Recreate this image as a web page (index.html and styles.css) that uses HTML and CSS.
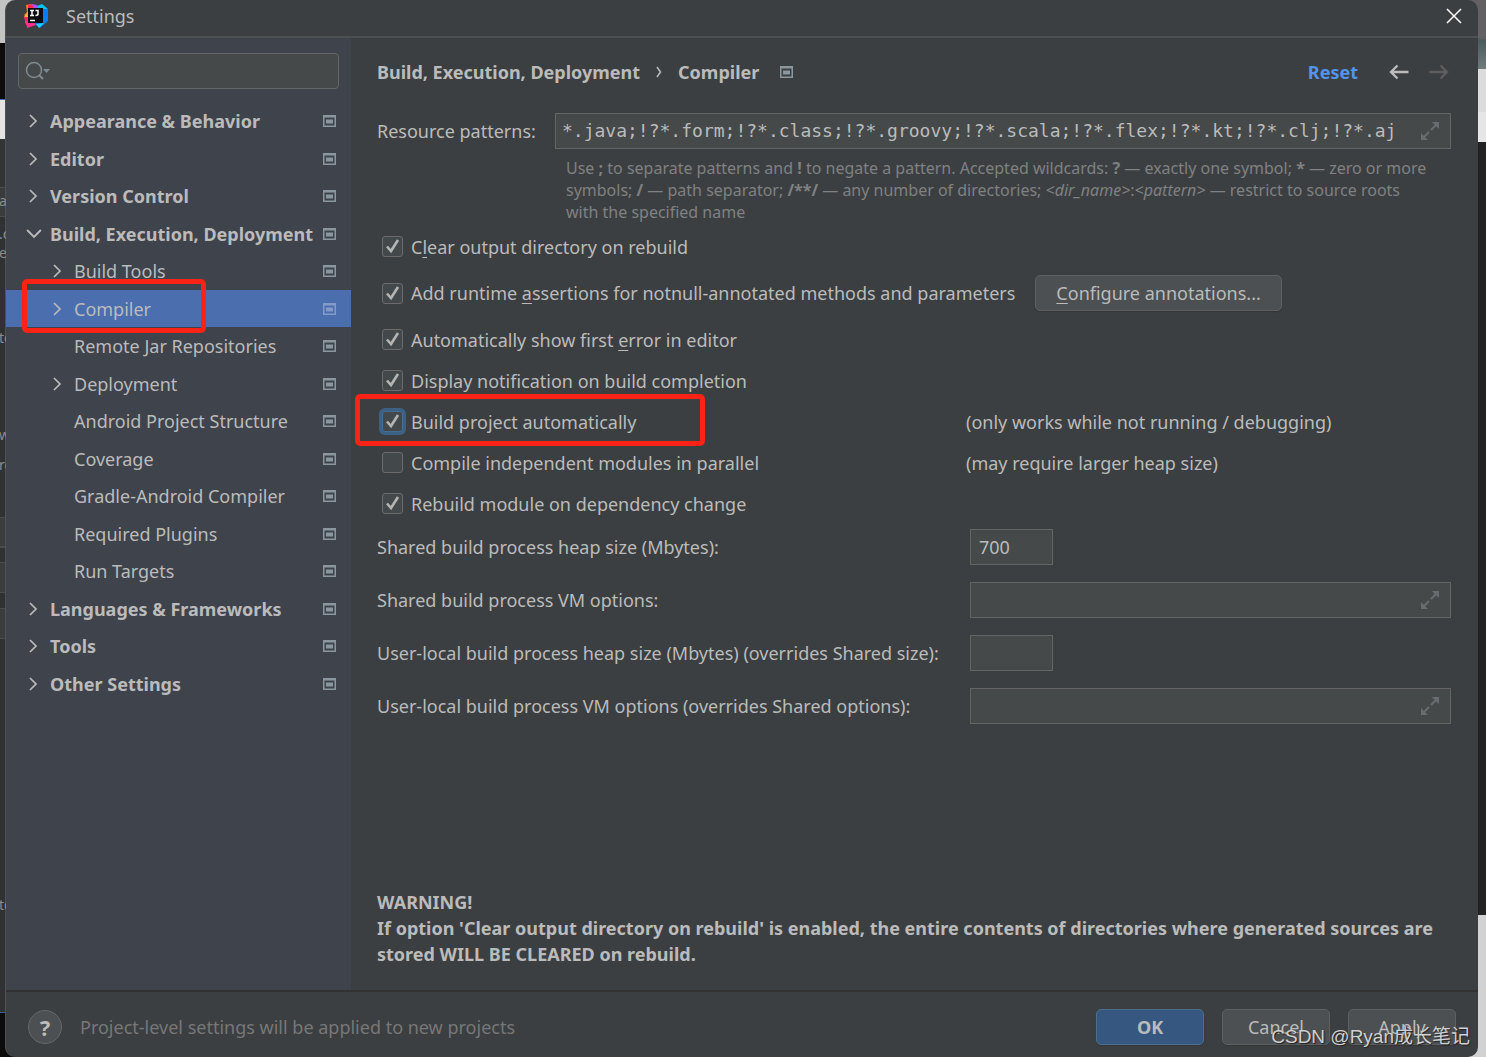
FILE: index.html
```html
<!DOCTYPE html>
<html lang="en">
<head>
    <meta charset="UTF-8">
    <meta name="viewport" content="width=device-width, initial-scale=1.0">
    <title>Settings</title>
    <link rel="stylesheet" href="styles.css">
</head>
<body>
    <svg class="sprite" aria-hidden="true">
        <symbol id="scope" viewBox="0 0 13 12">
            <path fill="currentColor" fill-rule="evenodd" d="M0 0h13v12H0zM1.500 2.500v8h10v-8z"/>
            <path fill="currentColor" d="M3 4.500h7v4H3z"/>
        </symbol>
        <symbol id="right" viewBox="0 0 10 14">
            <path fill="none" stroke="currentColor" stroke-width="1.700" d="M1 1l6 6-6 6"/>
        </symbol>
        <symbol id="down" viewBox="0 0 14 10">
            <path fill="none" stroke="currentColor" stroke-width="1.700" d="M1 1.500l6 6 6-6"/>
        </symbol>
        <symbol id="expand" viewBox="0 0 18 18">
            <path fill="currentColor" d="M11 0h7v7zM0 11l7 7H0z"/>
            <path fill="none" stroke="currentColor" stroke-width="2" d="M15 3l-5 5M3 15l5-5"/>
        </symbol>
        <symbol id="arrow" viewBox="0 0 20 16">
            <path fill="none" stroke="currentColor" stroke-width="2.400" d="M19.500 8H2.500M8.500 1.500L2 8l6.500 6.500"/>
        </symbol>
    </svg>

    <!-- editor that shows behind the dialog -->
    <div class="behind" aria-hidden="true">
        <span class="b1">a</span>
        <span class="b2">.c</span>
        <span class="b3">er</span>
        <span class="b4">te</span>
        <span class="b5">w</span>
        <span class="b6">re</span>
        <span class="b7">te</span>
    </div>

    <div class="window">
        <header class="titlebar">
            <svg class="logo" viewBox="0 0 24 24">
                <path fill="#fc801d" d="M2 1l6-1 4 3-5 18-6-2 1-6-2-2 3-3z"/>
                <path fill="#fe2857" d="M4 1l4-1 3 4-7 6zM0 13l5-3 3 8-6 3z"/>
                <path fill="#ffb13d" d="M0 13l5-6v6z"/>
                <path fill="#ff318c" d="M2 17h7l3 4-9 3z"/>
                <path fill="#b74af7" d="M8 0l5 1 2 4-5 1z"/>
                <path fill="#07c3f2" d="M13 2l5-2 6 5-1 5-8-4z"/>
                <path fill="#087cfa" d="M19 5l5 0v12l-8 7-5-4z"/>
                <path fill="#21d0ff" d="M12 20l8-1-5 5z"/>
                <path fill="#0c0c12" d="M4 4h15v15H4z"/>
                <path fill="none" stroke="#fff" stroke-width="1.500" d="M6 6.500h4M8 6.500v5M6 11.500h4M11.500 6.500H14v3.500q0 1.500-2.500 1.500M6 16.500h5"/>
            </svg>
            <span>Settings</span>
            <button class="close" aria-label="Close">
                <svg viewBox="0 0 16 16"><path fill="none" stroke="#fff" stroke-width="1.500" d="M1 1l14 14M15 1L1 15"/></svg>
            </button>
        </header>

        <div class="content">
            <nav class="sidebar">
                <label class="search">
                    <svg viewBox="0 0 26 20">
                        <circle cx="9" cy="9" r="7.500" fill="none" stroke="#7f8b91" stroke-width="1.500"/>
                        <path fill="none" stroke="#7f8b91" stroke-width="2" d="M14 14l4 4"/>
                        <path fill="#7f8b91" d="M18 8h7l-3.500 4z"/>
                    </svg>
                    <input type="text" aria-label="Search settings">
                </label>
                <ul class="tree">
                    <li class="group"><svg class="chev"><use href="#right"/></svg><a href="#">Appearance &amp; Behavior</a><svg class="scope"><use href="#scope"/></svg></li>
                    <li class="group"><svg class="chev"><use href="#right"/></svg><a href="#">Editor</a><svg class="scope"><use href="#scope"/></svg></li>
                    <li class="group"><svg class="chev"><use href="#right"/></svg><a href="#">Version Control</a><svg class="scope"><use href="#scope"/></svg></li>
                    <li class="group"><svg class="chev"><use href="#down"/></svg><a href="#">Build, Execution, Deployment</a><svg class="scope"><use href="#scope"/></svg></li>
                    <li class="child"><svg class="chev"><use href="#right"/></svg><a href="#">Build Tools</a><svg class="scope"><use href="#scope"/></svg></li>
                    <li class="child selected"><svg class="chev"><use href="#right"/></svg><a href="#">Compiler</a><svg class="scope"><use href="#scope"/></svg></li>
                    <li class="child"><svg class="chev"></svg><a href="#">Remote Jar Repositories</a><svg class="scope"><use href="#scope"/></svg></li>
                    <li class="child"><svg class="chev"><use href="#right"/></svg><a href="#">Deployment</a><svg class="scope"><use href="#scope"/></svg></li>
                    <li class="child"><svg class="chev"></svg><a href="#">Android Project Structure</a><svg class="scope"><use href="#scope"/></svg></li>
                    <li class="child"><svg class="chev"></svg><a href="#">Coverage</a><svg class="scope"><use href="#scope"/></svg></li>
                    <li class="child"><svg class="chev"></svg><a href="#">Gradle-Android Compiler</a><svg class="scope"><use href="#scope"/></svg></li>
                    <li class="child"><svg class="chev"></svg><a href="#">Required Plugins</a><svg class="scope"><use href="#scope"/></svg></li>
                    <li class="child"><svg class="chev"></svg><a href="#">Run Targets</a><svg class="scope"><use href="#scope"/></svg></li>
                    <li class="group"><svg class="chev"><use href="#right"/></svg><a href="#">Languages &amp; Frameworks</a><svg class="scope"><use href="#scope"/></svg></li>
                    <li class="group"><svg class="chev"><use href="#right"/></svg><a href="#">Tools</a><svg class="scope"><use href="#scope"/></svg></li>
                    <li class="group"><svg class="chev"><use href="#right"/></svg><a href="#">Other Settings</a><svg class="scope"><use href="#scope"/></svg></li>
                </ul>
            </nav>

            <main class="main">
                <div class="crumbs">
                    <b>Build, Execution, Deployment</b>
                    <svg class="sep" viewBox="0 0 6 12"><path fill="none" stroke="#bbb" stroke-width="1.500" d="M1 1l3.500 5L1 11"/></svg>
                    <b>Compiler</b>
                    <svg class="scope"><use href="#scope"/></svg>
                    <a class="reset" href="#">Reset</a>
                    <button class="nav" aria-label="Back"><svg><use href="#arrow"/></svg></button>
                    <button class="nav forward" aria-label="Forward" disabled><svg><use href="#arrow"/></svg></button>
                </div>

                <div class="patterns">
                    <label for="patterns">Resource patterns:</label>
                    <div class="field">
                        <input class="mono" type="text" id="patterns" value="*.java;!?*.form;!?*.class;!?*.groovy;!?*.scala;!?*.flex;!?*.kt;!?*.clj;!?*.aj">
                        <svg class="expand"><use href="#expand"/></svg>
                    </div>
                    <p class="hint">Use <b>;</b> to separate patterns and <b>!</b> to negate a pattern. Accepted wildcards: <b>?</b> — exactly one symbol; <b>*</b> — zero or more<br>
                    symbols; <b>/</b> — path separator; <b>/**/</b> — any number of directories; <i>&lt;dir_name&gt;</i>:<i>&lt;pattern&gt;</i> — restrict to source roots<br>
                    with the specified name</p>
                </div>

                <div class="checks">
                    <div class="check">
                        <label><input type="checkbox" checked><span>C<u>l</u>ear output directory on rebuild</span></label>
                    </div>
                    <div class="check wide">
                        <label><input type="checkbox" checked><span>Add runtime <u>a</u>ssertions for notnull-annotated methods and parameters</span></label>
                        <button class="btn"><span><u>C</u>onfigure annotations...</span></button>
                    </div>
                    <div class="check">
                        <label><input type="checkbox" checked><span>Automatically show first <u>e</u>rror in editor</span></label>
                    </div>
                    <div class="check">
                        <label><input type="checkbox" checked><span>Display notification on build completion</span></label>
                    </div>
                    <div class="check marked">
                        <label><input class="focused" type="checkbox" checked><span>Build project automatically</span></label>
                        <span>(only works while not running / debugging)</span>
                    </div>
                    <div class="check">
                        <label><input type="checkbox"><span>Compile independent modules in parallel</span></label>
                        <span>(may require larger heap size)</span>
                    </div>
                    <div class="check">
                        <label><input type="checkbox" checked><span>Rebuild module on dependency change</span></label>
                    </div>
                </div>

                <div class="options">
                    <label for="heap">Shared build process heap size (Mbytes):</label>
                    <div class="field short"><input type="text" id="heap" value="700"></div>
                    <label for="vm">Shared build process VM options:</label>
                    <div class="field"><input type="text" id="vm"><svg class="expand"><use href="#expand"/></svg></div>
                    <label for="userHeap">User-local build process heap size (Mbytes) (overrides Shared size):</label>
                    <div class="field short"><input type="text" id="userHeap"></div>
                    <label for="userVm">User-local build process VM options (overrides Shared options):</label>
                    <div class="field"><input type="text" id="userVm"><svg class="expand"><use href="#expand"/></svg></div>
                </div>

                <p class="warning">WARNING!<br>
                If option 'Clear output directory on rebuild' is enabled, the entire contents of directories where generated sources are stored WILL BE CLEARED on rebuild.</p>
            </main>
        </div>

        <footer class="footer">
            <button class="help" aria-label="Help">?</button>
            <span class="note">Project-level settings will be applied to new projects</span>
            <button class="btn primary">OK</button>
            <button class="btn">Cancel</button>
            <button class="btn">Apply</button>
        </footer>
    </div>

    <div class="watermark">CSDN @Ryan成长笔记</div>
</body>
</html>
```
FILE: styles.css
```css
*, *::after {
    box-sizing: border-box;
}
body {
    margin: 0;
    min-height: 100vh;
    display: flex;
    font: 18px/24px "Noto Sans", "Open Sans", sans-serif;
    color: #bbbbbb;
    background:
        linear-gradient(#c4c4c4 43px, #0c0c0c 43px, #0c0c0c 99px, #4a76b0 99px, #4a76b0 100px, #e4e4e4 100px, #e4e4e4 139px, #323435 139px, #323435 187px, #4a4c4d 187px, #4a4c4d 188px, #393b3c 188px, #393b3c 216px, #4a4c4d 216px, #4a4c4d 217px, #303132 217px, #303132 517px, #4a4c4d 517px, #4a4c4d 518px, #3a3c3d 518px, #3a3c3d 546px, #4a4c4d 546px, #4a4c4d 548px, #303132 548px, #303132 562px, #4a4c4d 562px, #4a4c4d 563px, #3a3c3d 563px, #3a3c3d 592px, #4a4c4d 592px, #4a4c4d 593px, #303132 593px, #303132 608px, #4a4c4d 608px, #4a4c4d 609px, #3a3c3d 609px, #3a3c3d 638px, #4a4c4d 638px, #4a4c4d 639px, #2f3132 639px, #2f3132 1012px, #34618f 1012px, #34618f 1013px, #0c0c0c 1013px) left / 20px 100% no-repeat,
        linear-gradient(#646164 38px, #4b5b5c 40px, #6f7a7b 69px, #dcdcdc 69px, #dcdcdc 112px, #e6e6e6 112px, #e6e6e6 142px, #222222 142px, #222222 915px, #d2d2d2 915px) right / 20px 100% no-repeat;
}
.sprite {
    position: absolute;
    width: 0;
    height: 0;
}
ul, p {
    margin: 0;
    padding: 0;
}
a {
    color: inherit;
    text-decoration: none;
}
button, input {
    font: inherit;
    color: inherit;
}
u {
    text-underline-offset: 3px;
}

/* slice of the editor on the left edge */
.behind {
    position: absolute;
    left: 0;
    top: 0;
    width: 6px;
    height: 100%;
    overflow: hidden;
    font-size: 14px;
    line-height: 20px;
    color: #8c8c8c;
}
.behind span {
    position: absolute;
    left: -1px;
}
.b1 { top: 191px; }
.b2 { top: 224px; }
.b3 { top: 243px; }
.b4 { top: 328px; }
.b5 { top: 425px; }
.b6 { top: 455px; }
.b7 { top: 895px; }

.window {
    flex: 1;
    display: flex;
    flex-direction: column;
    margin: 0 8px 0 5px;
    border-left: 1px solid #505254;
    border-radius: 10px;
    overflow: hidden;
    background-color: #3c3f41;
}
.titlebar {
    display: flex;
    align-items: center;
    height: 38px;
    padding: 0 16px 4px 18px;
    border-bottom: 2px solid #4d5052;
}
.logo {
    width: 24px;
    height: 24px;
    margin-right: 18px;
}
.close {
    margin-left: auto;
    padding: 0;
    border: none;
    background: none;
}
.close svg {
    display: block;
    width: 16px;
    height: 16px;
}
.content {
    flex: 1;
    display: flex;
}

/* sidebar */
.sidebar {
    width: 345px;
    padding-top: 15px;
    background-color: #3f434c;
}
.search {
    display: flex;
    align-items: center;
    height: 36px;
    margin: 0 12px 13px;
    padding: 0 6px;
    border: 1px solid #646768;
    border-radius: 4px;
    background-color: #45494a;
}
.search svg {
    width: 26px;
    height: 20px;
}
.search input {
    flex: 1;
    min-width: 0;
    border: none;
    outline: none;
    background: none;
}
.tree {
    list-style: none;
}
.tree li {
    display: flex;
    align-items: center;
    height: 38px;
    padding: 0 15px 0 20px;
}
.tree li:nth-child(even) {
    height: 37px;
}
.tree .child {
    padding-left: 44px;
}
.tree .group {
    font-weight: bold;
}
.tree a {
    flex: 1;
    margin-left: 8px;
    white-space: nowrap;
}
.chev {
    width: 16px;
    height: 14px;
}
.tree .selected {
    position: relative;
    background-color: #4b6eaf;
}
.tree .selected::after,
.marked::after {
    content: "";
    position: absolute;
    border: 5px solid #fb2216;
    border-radius: 5px;
    pointer-events: none;
}
.tree .selected::after {
    left: 16px;
    top: -11px;
    width: 184px;
    height: 54px;
}
.scope {
    width: 13px;
    height: 12px;
    color: #8b979e;
}
.selected .scope {
    color: #839bc6;
}

/* right part */
.main {
    flex: 1;
    display: flex;
    flex-direction: column;
    padding: 22px 27px 23px 26px;
}
.crumbs {
    display: flex;
    align-items: center;
}
.sep {
    width: 6px;
    height: 12px;
    margin: 0 16px;
}
.crumbs .scope {
    margin-left: 21px;
}
.reset {
    margin-left: auto;
    margin-right: 31px;
    font-weight: bold;
    color: #5394ec;
}
.nav {
    padding: 0;
    border: none;
    background: none;
    color: #bbbbbb;
}
.nav svg {
    display: block;
    width: 20px;
    height: 16px;
}
.forward {
    margin: 0 2px 0 20px;
    color: #5c5e60;
    transform: scaleX(-1);
}
.patterns {
    display: grid;
    grid-template-columns: 178px 1fr;
    align-items: center;
    margin-top: 29px;
}
.field {
    display: flex;
    align-items: center;
    height: 36px;
    padding-right: 11px;
    border: 1px solid #646464;
    background-color: #45494a;
}
.field input {
    flex: 1;
    min-width: 0;
    padding: 0 8px;
    border: none;
    outline: none;
    background: none;
}
.field .mono {
    padding-left: 6px;
    font-family: "DejaVu Sans Mono", monospace;
}
.field.short {
    width: 83px;
    padding: 0;
}
.expand {
    width: 18px;
    height: 18px;
    color: #686d70;
}
.hint {
    grid-column: 2;
    padding: 8px 0 0 11px;
    font-size: 16px;
    line-height: 22px;
    color: #7f8182;
}
.checks {
    display: flex;
    flex-direction: column;
    gap: 16px;
    margin-top: 11px;
}
.check {
    display: grid;
    grid-template-columns: 589px 1fr;
    align-items: center;
    height: 25px;
}
.check label {
    display: flex;
    align-items: center;
    gap: 8px;
    padding-left: 5px;
}
.check.wide {
    display: flex;
    gap: 20px;
    height: 36px;
}
.check input {
    appearance: none;
    width: 21px;
    height: 21px;
    margin: 0;
    border: 1px solid #6b6b6b;
    border-radius: 3px;
    background: #43494a;
}
.check input:checked {
    background: #43494a url("data:image/svg+xml,%3Csvg xmlns='http://www.w3.org/2000/svg' viewBox='0 0 19 19'%3E%3Cpath d='M4 9.500l4 4.500 7-11' fill='none' stroke='%23b4b4b4' stroke-width='2.600'/%3E%3C/svg%3E") center no-repeat;
}
.check .focused {
    border-color: #466d94;
    box-shadow: 0 0 0 3px #3d6185;
}
.marked {
    position: relative;
}
.marked::after {
    left: -22px;
    top: -15px;
    width: 350px;
    height: 52px;
}
.options {
    display: grid;
    grid-template-columns: 593px 1fr;
    align-items: center;
    row-gap: 17px;
    margin-top: 13px;
}
.warning {
    margin-top: auto;
    font-weight: bold;
    line-height: 26px;
}

/* buttons */
.btn {
    min-width: 108px;
    height: 36px;
    padding: 0 20px;
    border: 1px solid #5e6060;
    border-radius: 5px;
    background-color: #4c5052;
    box-shadow: 0 1px 1px #333638;
}
.primary {
    border-color: #4c708c;
    background-color: #365880;
    font-weight: bold;
}
.footer {
    display: flex;
    align-items: center;
    gap: 18px;
    padding: 17px 22px 12px;
    border-top: 2px solid #323232;
}
.help {
    width: 34px;
    height: 34px;
    padding: 0;
    border: 1px solid #646767;
    border-radius: 50%;
    background-color: #4c5052;
    font-size: 22px;
    font-weight: bold;
}
.note {
    flex: 1;
    color: #777777;
}
.watermark {
    position: absolute;
    right: 16px;
    bottom: 8px;
    font-family: "Liberation Sans", "Noto Sans CJK SC", sans-serif;
    font-size: 19px;
    color: #d0d0d0;
    text-shadow: 1px 1px 1px #222222;
}
```
